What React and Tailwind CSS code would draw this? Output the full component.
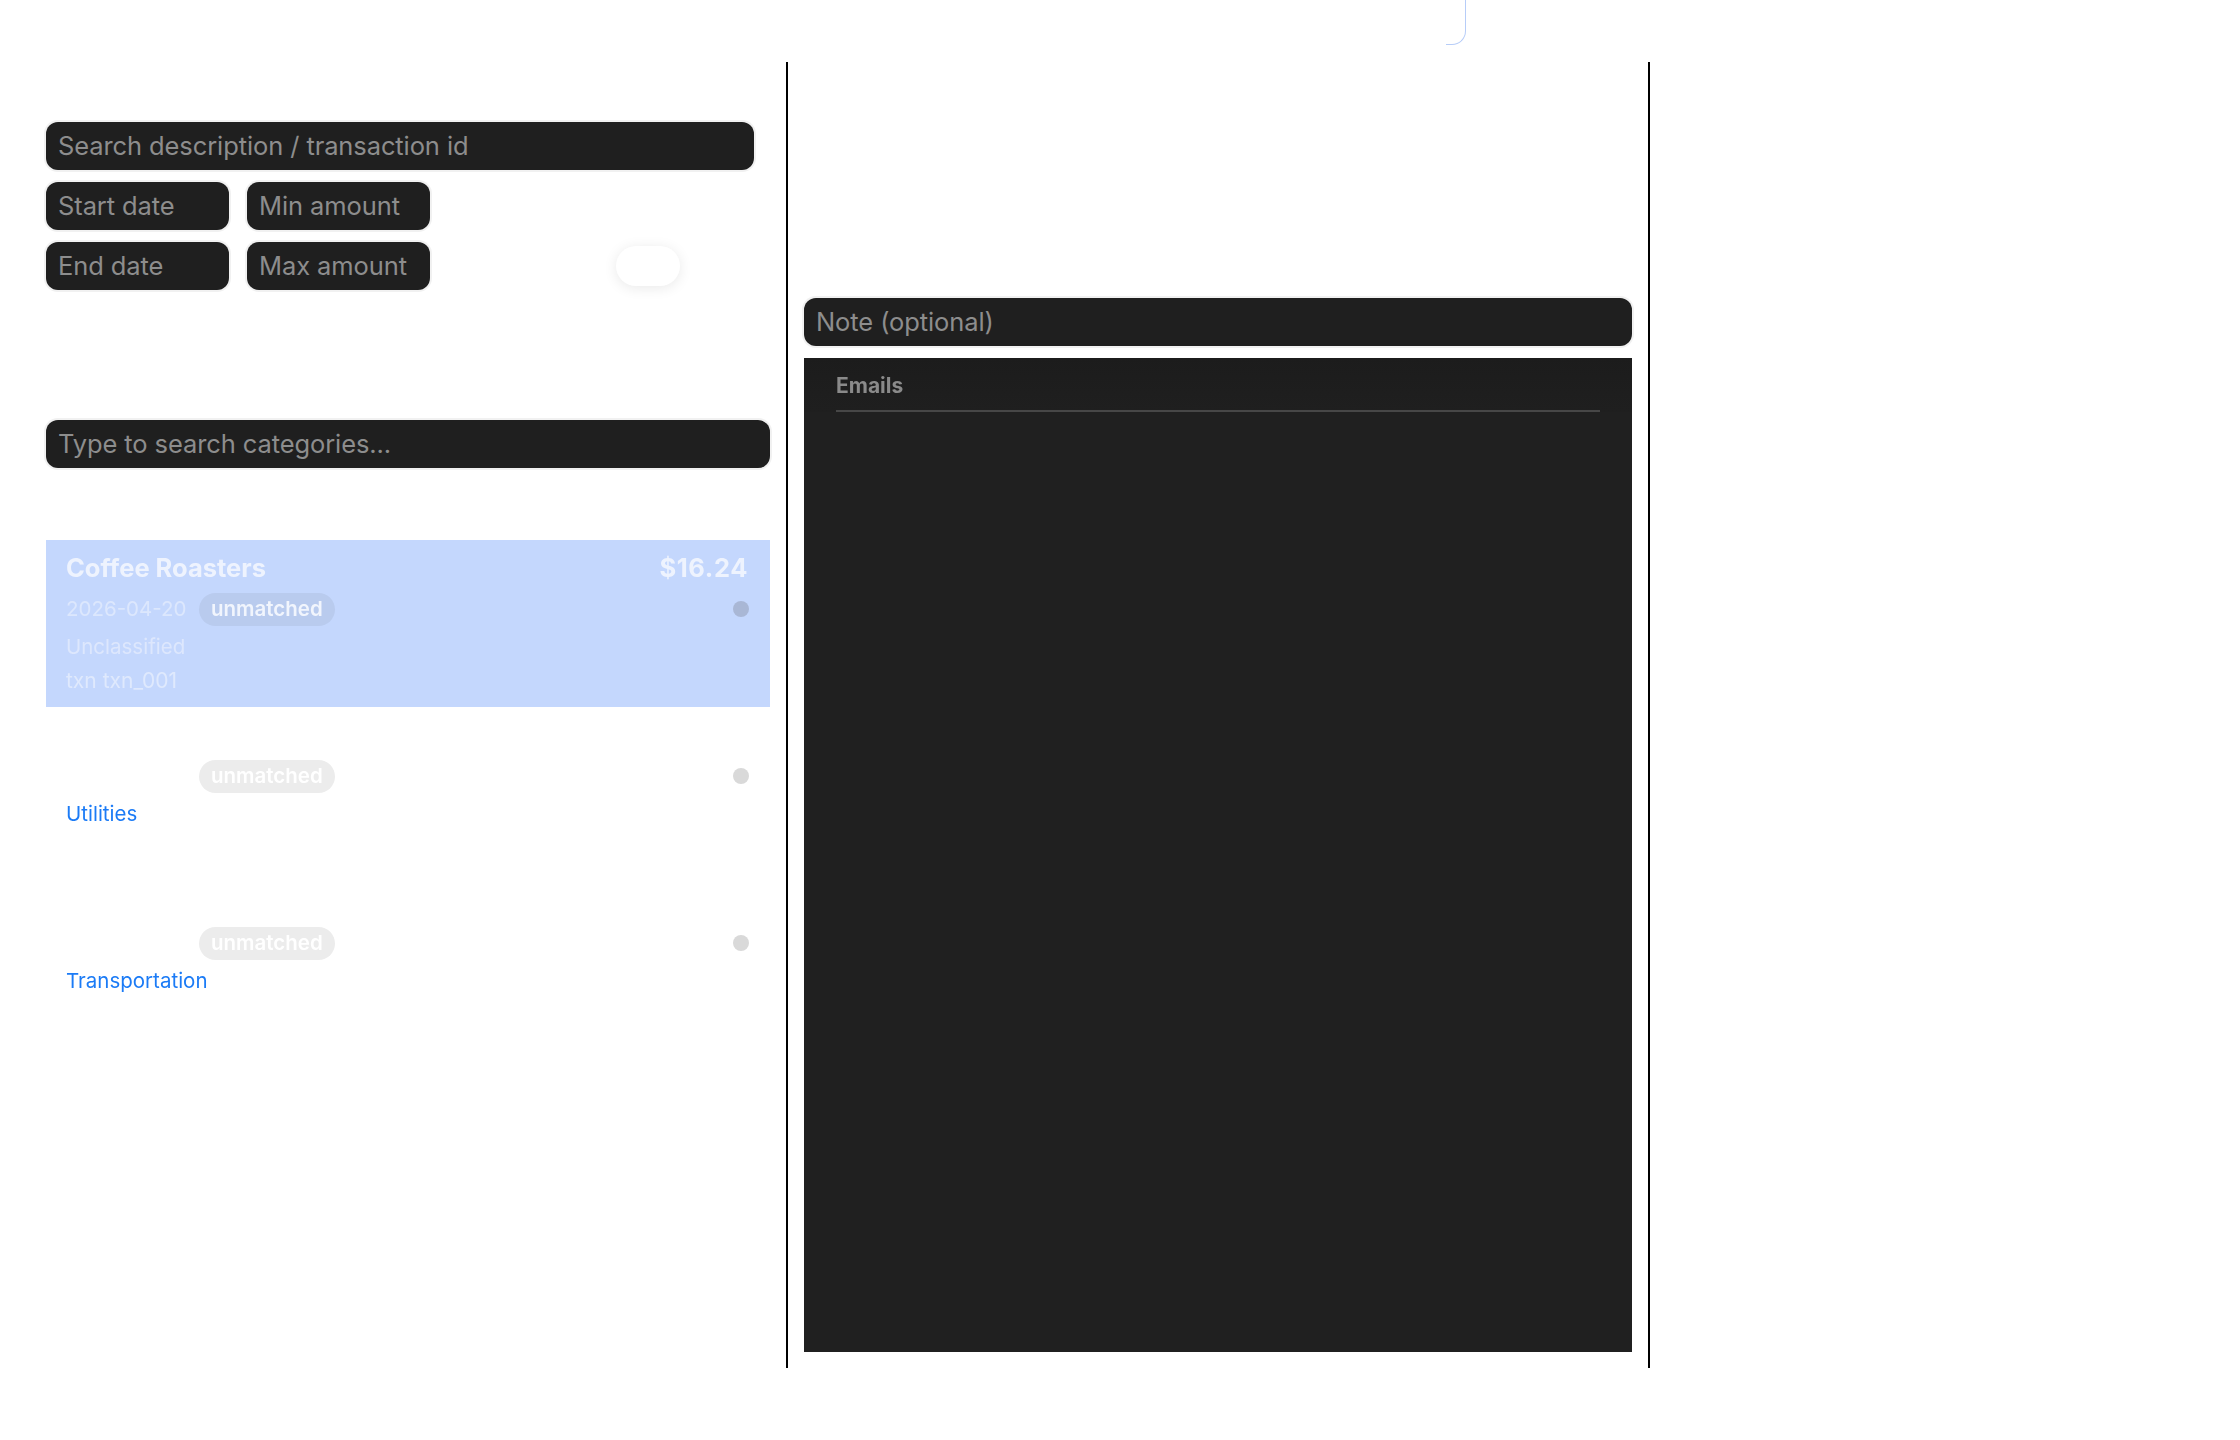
import React from "react";

const font = { fontFamily: "Inter, 'Noto Sans', sans-serif" };

function DarkInput({ placeholder, className = "" }) {
  return (
    <div
      className={`flex h-[48px] items-center rounded-[12px] bg-[#1f1f1f] pl-[12px] pt-[1px] text-[25.5px] tracking-[-0.1px] text-[#8d8d8d] ring-2 ring-[#f1f1f1] ${className}`}
    >
      {placeholder}
    </div>
  );
}

const txns = [
  {
    title: "Coffee Roasters",
    amount: "$16.24",
    date: "2026-04-20",
    category: "Unclassified",
    txn: "txn txn_001",
    selected: true,
  },
  {
    title: "City Power & Light",
    amount: "$84.10",
    date: "2026-04-18",
    category: "Utilities",
    txn: "txn txn_002",
    selected: false,
  },
  {
    title: "Metro Transit",
    amount: "$2.75",
    date: "2026-04-17",
    category: "Transportation",
    txn: "txn txn_003",
    selected: false,
  },
];

function TxnRow({ t }) {
  const sel = t.selected;
  return (
    <div
      className={`flex flex-col pb-[14px] pl-[20px] pr-[22px] pt-[12px] ${
        sel ? "bg-[#c4d7fd]" : "bg-white"
      }`}
    >
      <div className="blur-[0.4px]">
        <div className="flex h-[32px] items-center justify-between">
          <span
            className={`text-[25.5px] font-bold ${
              sel ? "text-[#eef3fe]" : "text-white"
            }`}
          >
            {t.title}
          </span>
          <span
            className={`text-[25.5px] font-bold tracking-[0.6px] ${
              sel ? "text-[#eef3fe]" : "text-white"
            }`}
          >
            {t.amount}
          </span>
        </div>
        <div className="mt-[8px] flex h-[34px] items-center">
          <span
            className={`w-[133px] text-[20.5px] ${
              sel ? "text-[#dce7fd]" : "text-white"
            }`}
          >
            {t.date}
          </span>
          <span
            className={`flex h-[33px] items-center rounded-full px-[12px] text-[20.5px] font-semibold ${
              sel ? "bg-[#b9cbee] text-[#f1f5fd]" : "bg-[#ececec] text-white"
            }`}
          >
            unmatched
          </span>
          <span
            className={`ml-auto mr-[-1px] h-[16px] w-[16px] rounded-full ${
              sel ? "bg-[#a9b7d5]" : "bg-[#d9d9d9]"
            }`}
          />
        </div>
        <div
          className={`mt-[9px] text-[20.5px] leading-[24px] ${
            sel ? "text-[#dde7fd]" : "text-[#1b7bf6]"
          }`}
        >
          {t.category}
        </div>
        <div
          className={`mt-[10px] text-[21px] leading-[24px] ${
            sel ? "text-[#dfe9fd]" : "text-white"
          }`}
        >
          {t.txn}
        </div>
      </div>
    </div>
  );
}

export default function App() {
  return (
    <div className="relative min-h-[1440px] w-[2240px] overflow-hidden bg-white" style={font}>
      {/* corner of a focused control peeking in at the top */}
      <div className="absolute left-[1446px] top-[-30px] h-[75px] w-[20px] rounded-br-[14px] border-b border-r border-[#b7cdf8]" />

      <div className="flex pt-[62px]">
        {/* filters + transaction list */}
        <div className="flex h-[1306px] w-[788px] flex-col border-r-2 border-black pl-[46px] pr-[16px] pt-[60px]">
          <DarkInput placeholder="Search description / transaction id" className="w-[708px]" />
          <div className="mt-[12px] flex flex-col gap-[12px]">
            <div className="flex gap-[18px]">
              <DarkInput placeholder="Start date" className="w-[183px]" />
              <DarkInput placeholder="Min amount" className="w-[183px]" />
            </div>
            <div className="flex items-center gap-[18px]">
              <DarkInput placeholder="End date" className="w-[183px]" />
              <DarkInput placeholder="Max amount" className="w-[183px]" />
              <div className="ml-[168px] h-[40px] w-[64px] rounded-full bg-white shadow-[0_2px_14px_rgba(0,0,0,0.09)]" />
            </div>
          </div>

          <DarkInput placeholder="Type to search categories..." className="mt-[130px] w-full" />

          <div className="mt-[72px] flex flex-col">
            {txns.map((t) => (
              <TxnRow key={t.txn} t={t} />
            ))}
          </div>
        </div>

        {/* note + emails */}
        <div className="flex h-[1306px] w-[862px] flex-col border-r-2 border-black px-[16px] pb-[16px] pt-[236px]">
          <DarkInput placeholder="Note (optional)" className="w-full" />
          <div className="mt-[12px] flex flex-1 flex-col bg-[#202020]">
            <div className="bg-gradient-to-b from-[#1c1c1c] to-[#1f1f1f] px-[32px]">
              <div className="h-[54px] border-b-2 border-[#474747] pt-[12px]">
                <span className="text-[21px] font-bold text-[#8a8a8a] blur-[0.4px]">Emails</span>
              </div>
            </div>
            <div className="flex-1" />
          </div>
        </div>
      </div>
    </div>
  );
}
